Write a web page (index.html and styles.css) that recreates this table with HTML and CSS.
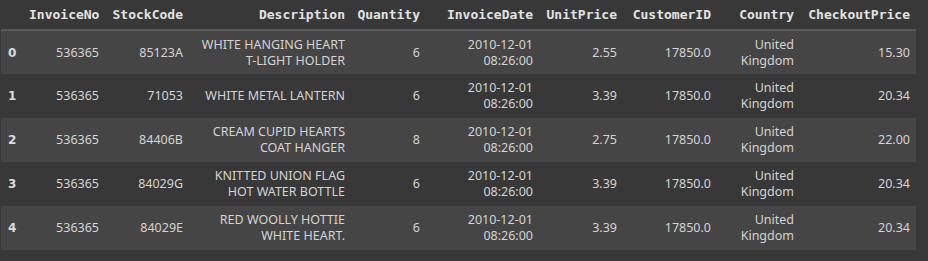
FILE: index.html
```html
<!DOCTYPE html>
<html>
<head>
<meta charset="utf-8">
<link rel="stylesheet" href="styles.css">
</head>
<body>
<table class="df">
  <colgroup>
    <col class="c0"><col class="c1"><col class="c2"><col class="c3"><col class="c4"><col class="c5"><col class="c6"><col class="c7"><col class="c8"><col class="c9">
  </colgroup>
  <thead>
    <tr>
      <th></th><th>InvoiceNo</th><th>StockCode</th><th>Description</th><th>Quantity</th><th>InvoiceDate</th><th>UnitPrice</th><th>CustomerID</th><th>Country</th><th>CheckoutPrice</th>
    </tr>
  </thead>
  <tbody>
    <tr>
      <th>0</th><td>536365</td><td>85123A</td><td>WHITE HANGING HEART<br>T-LIGHT HOLDER</td><td>6</td><td>2010-12-01<br>08:26:00</td><td>2.55</td><td>17850.0</td><td>United<br>Kingdom</td><td>15.30</td>
    </tr>
    <tr>
      <th>1</th><td>536365</td><td>71053</td><td>WHITE METAL LANTERN</td><td>6</td><td>2010-12-01<br>08:26:00</td><td>3.39</td><td>17850.0</td><td>United<br>Kingdom</td><td>20.34</td>
    </tr>
    <tr>
      <th>2</th><td>536365</td><td>84406B</td><td>CREAM CUPID HEARTS<br>COAT HANGER</td><td>8</td><td>2010-12-01<br>08:26:00</td><td>2.75</td><td>17850.0</td><td>United<br>Kingdom</td><td>22.00</td>
    </tr>
    <tr>
      <th>3</th><td>536365</td><td>84029G</td><td>KNITTED UNION FLAG<br>HOT WATER BOTTLE</td><td>6</td><td>2010-12-01<br>08:26:00</td><td>3.39</td><td>17850.0</td><td>United<br>Kingdom</td><td>20.34</td>
    </tr>
    <tr>
      <th>4</th><td>536365</td><td>84029E</td><td>RED WOOLLY HOTTIE<br>WHITE HEART.</td><td>6</td><td>2010-12-01<br>08:26:00</td><td>3.39</td><td>17850.0</td><td>United<br>Kingdom</td><td>20.34</td>
    </tr>
  </tbody>
</table>
</body>
</html>
```

FILE: styles.css
```css
html, body {
  margin: 0;
  padding: 0;
  background: #383838;
}
body {
  padding-left: 1px;
}
.df {
  border-collapse: collapse;
  table-layout: fixed;
  width: 915px;
  font-family: "Noto Sans", "Open Sans", sans-serif;
  font-size: 12.5px;
  color: #d4d4d4;
}
.c0 { width: 22px; }
.c1 { width: 82px; }
.c2 { width: 84px; }
.c3 { width: 162px; }
.c4 { width: 75px; }
.c5 { width: 113px; }
.c6 { width: 84px; }
.c7 { width: 94px; }
.c8 { width: 83px; }
.c9 { width: 116px; }
.df thead th {
  height: 30px;
  padding: 0 6px;
  font-family: "DejaVu Sans Mono", "Liberation Mono", monospace;
  font-weight: bold;
  font-size: 13px;
  color: #e3e3e3;
  text-align: right;
  border-bottom: 2px solid #5a5a5a;
  box-sizing: border-box;
  white-space: nowrap;
}
.df tbody tr {
  height: 44px;
}
.df tbody tr:nth-child(odd) {
  background: #454545;
}
.df tbody th {
  text-align: left;
  padding: 0 0 0 7px;
  font-weight: bold;
  font-family: "DejaVu Sans", sans-serif;
  font-size: 12px;
  color: #dcdcdc;
}
.df td {
  padding: 0 6px;
  text-align: right;
  line-height: 16px;
  vertical-align: middle;
}
```
